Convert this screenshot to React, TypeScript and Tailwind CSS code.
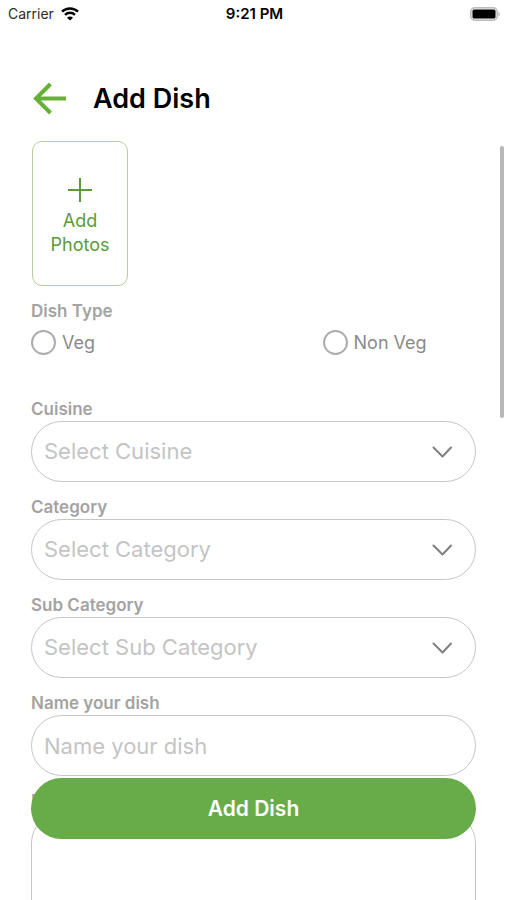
import { useState } from "react";

function StatusBar() {
  return (
    <div className="grid h-7 shrink-0 grid-cols-3 items-center pr-1.5 pl-2 text-black">
      <div className="flex items-center gap-1.5 text-[14px] leading-5 text-[#2b2b2b]">
        <span>Carrier</span>
        <svg className="h-[14px] w-5" viewBox="0 0 18 14" fill="none" stroke="#000" strokeWidth="2.4" aria-hidden="true">
          <path d="M1 4.7C5.4.4 12.6.4 17 4.7" />
          <path d="M4 7.8c2.8-2.7 7.2-2.7 10 0" />
          <path d="M9 13.6 6 10.7c1.7-1.5 4.3-1.5 6 0z" fill="#000" stroke="none" />
        </svg>
      </div>
      <div className="text-center text-[15px] leading-5 font-semibold">9:21 PM</div>
      <svg className="h-[14px] w-[31px] justify-self-end" viewBox="0 0 31 14" aria-hidden="true">
        <rect x="0.75" y="0.75" width="26.5" height="12.5" rx="4" fill="#eee" stroke="#bbb" strokeWidth="1.5" />
        <rect x="2.500" y="2.5" width="23" height="9" rx="1.5" fill="#000" />
        <path d="M28.5 4.8c1.8.6 1.8 3.8 0 4.4z" fill="#b4b4b4" />
      </svg>
    </div>
  );
}

const labelStyle = "block h-[22px] text-[17px] leading-5 font-semibold text-[#a3a3a3]";
const boxStyle =
  "block h-[61px] w-full rounded-full border border-[#c6c6c6] bg-white px-3 text-[22px] text-[#c4c4c4] outline-none placeholder:text-[#c4c4c4]";

function SelectField({ id, label, placeholder, options }: { id: string; label: string; placeholder: string; options: string[] }) {
  return (
    <div>
      <label htmlFor={id} className={labelStyle}>{label}</label>
      <div className="relative">
        <select id={id} defaultValue="" className={`${boxStyle} appearance-none`}>
          <option value="">{placeholder}</option>
          {options.map((o) => (
            <option key={o}>{o}</option>
          ))}
        </select>
        <svg className="pointer-events-none absolute top-1/2 right-6 h-3 w-5 -translate-y-1/2" viewBox="0 0 20 12" fill="none" stroke="#808080" strokeWidth="2" strokeLinecap="round" strokeLinejoin="round" aria-hidden="true">
          <path d="M1.500 1.500 10.500 10.500 19 1.500" />
        </svg>
      </div>
    </div>
  );
}

function DishType() {
  const [value, setValue] = useState("");
  return (
    <fieldset className="mt-[15px]">
      <legend className={labelStyle}>Dish Type</legend>
      <div className="mt-[7px] grid grid-cols-[19fr_10fr]">
        {["Veg", "Non Veg"].map((name) => (
          <label key={name} className="flex h-[25px] items-center gap-1.5 text-[18px] text-[#8a8a8a]">
            <input
              type="radio"
              name="dish-type"
              checked={value === name}
              onChange={() => setValue(name)}
              className="size-[25px] shrink-0 appearance-none rounded-full border-2 border-[#acacac] checked:border-8 checked:border-[#67ac48]"
            />
            {name}
          </label>
        ))}
      </div>
    </fieldset>
  );
}

export default function App() {
  return (
    <div className="relative flex h-screen flex-col overflow-hidden bg-white font-['Inter','Liberation_Sans',sans-serif]">
      <StatusBar />
      <header className="flex shrink-0 items-center gap-[25px] px-[33px] pt-[51px]">
        <button type="button" aria-label="Back">
          <svg className="block h-10 w-[35px]" viewBox="0 0 35 40" fill="none" stroke="#67b036" strokeWidth="4" aria-hidden="true">
            <path d="M33 19.500H4" />
            <path d="M17.500 5 3 19.500 17.500 34" />
          </svg>
        </button>
        <h1 className="text-[27px] leading-10 font-semibold text-black">Add Dish</h1>
      </header>

      <main className="min-h-0 flex-1 overflow-hidden px-[31px] pt-[22px]">
        <button type="button" className="ml-px flex h-[145px] w-24 flex-col items-center justify-center rounded-[10px] border border-[#b3cf9a] pt-1.5 text-[18px] leading-6 text-[#5b9a3b]">
          <svg className="mb-1.5 size-[26px]" viewBox="0 0 26 26" fill="none" stroke="#5b9a3b" strokeWidth="2" aria-hidden="true">
            <path d="M13 1v24M1 13h24" />
          </svg>
          <span>Add</span>
          <span>Photos</span>
        </button>

        <DishType />

        <div className="mt-11 flex flex-col gap-[15px]">
          <SelectField id="cuisine" label="Cuisine" placeholder="Select Cuisine" options={["Indian", "Italian", "Chinese"]} />
          <SelectField id="category" label="Category" placeholder="Select Category" options={["Starter", "Main Course", "Dessert"]} />
          <SelectField id="sub-category" label="Sub Category" placeholder="Select Sub Category" options={["Soup", "Salad", "Curry"]} />
          <div>
            <label htmlFor="name" className={labelStyle}>Name your dish</label>
            <input id="name" type="text" placeholder="Name your dish" className={boxStyle} />
          </div>
          <div>
            <label htmlFor="description" className={labelStyle}>Description</label>
            <textarea id="description" className="block h-40 w-full resize-none rounded-[30px] border border-[#c6c6c6] px-3 py-4 text-[22px] outline-none" />
          </div>
        </div>
      </main>

      <div className="absolute top-[146px] right-[3px] h-[272px] w-1 rounded-full bg-[#b8b8b8]" />
      <div className="absolute inset-x-[31px] bottom-[61px]">
        <button type="button" className="block h-[61px] w-full rounded-full bg-[#67ac48] text-[21px] font-semibold text-white">
          Add Dish
        </button>
      </div>
    </div>
  );
}
